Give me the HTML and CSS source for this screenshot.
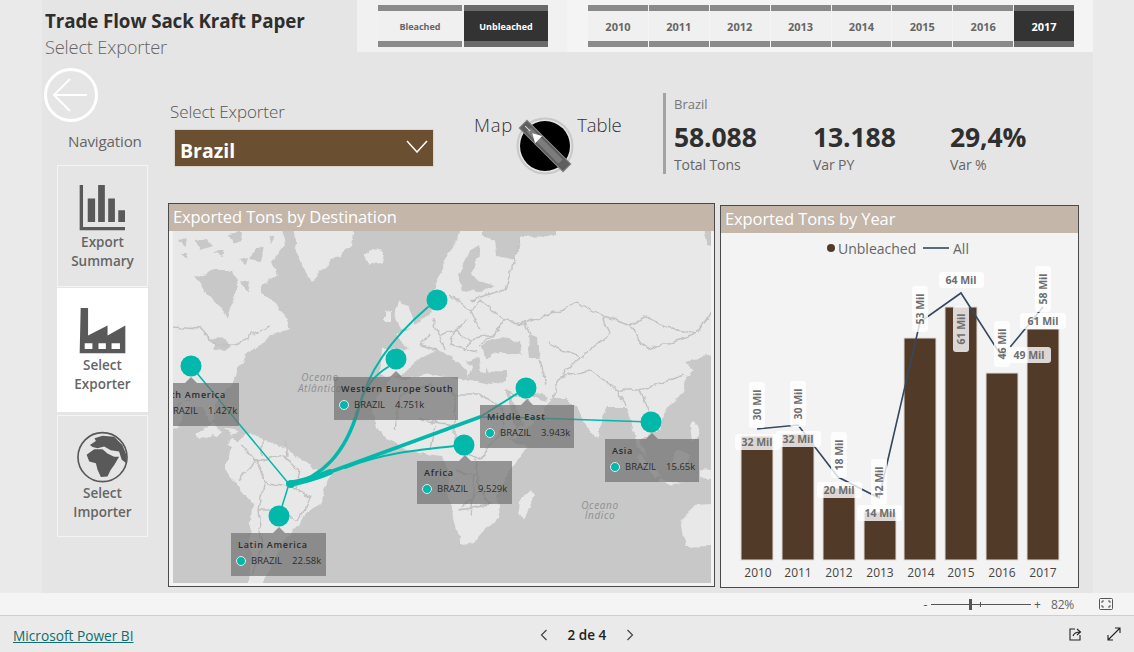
FILE: index.html
```html
<!DOCTYPE html>
<html lang="pt">
<head>
<meta charset="utf-8">
<title>Trade Flow Sack Kraft Paper</title>
<link rel="stylesheet" href="styles.css">
</head>
<body>
<div class="report">
  <div class="canvas">
    <header class="top">
      <div class="titles">
        <div class="title">Trade Flow Sack Kraft Paper</div>
        <div class="subtitle">Select Exporter</div>
      </div>
      <div class="slicers">
        <div class="slicer slicer-type">
          <div class="chip chip-small">Bleached</div>
          <div class="chip chip-small on">Unbleached</div>
        </div>
        <div class="slicer slicer-year">
          <div class="chip">2010</div><div class="chip">2011</div><div class="chip">2012</div><div class="chip">2013</div>
          <div class="chip">2014</div><div class="chip">2015</div><div class="chip">2016</div><div class="chip on">2017</div>
        </div>
      </div>
    </header>
    <div class="body">
      <nav class="side">
        <svg class="back" viewBox="0 0 56 56"><circle cx="28" cy="28" r="25.500" class="back-ring"/><path d="M44 28H11M27 12 11 28 27 44" class="back-arrow"/></svg>
        <div class="nav-label">Navigation</div>
        <div class="nav-btn">
          <svg class="ico ico-chart" viewBox="120 75 140 137"><path d="M122 75h10v125h125v10H122zM146 115h22v70h-22zM177 75h20v110h-20zM207 115h20v70h-20zM237 150h20v35h-20z"/></svg>
          <div>Export<br>Summary</div>
        </div>
        <div class="nav-btn active">
          <svg class="ico ico-factory" viewBox="120 445 140 137"><path fill-rule="evenodd" d="M125 445h22v82l58-30v30l53-30v83H122zM137 550v17h23v-17zM178 550v17h22v-17zM217 550v17h25v-17z"/></svg>
          <div>Select<br>Exporter</div>
        </div>
        <div class="nav-btn">
          <svg class="ico ico-globe" viewBox="110 808 160 160">
            <circle cx="190" cy="887" r="74" class="globe-ring"/>
            <path d="M152 850 170 838 166 830 190 822 225 825 250 850 262 880 262 905 248 895 240 870 215 866 195 855 175 860 160 856zM142 880 165 863 190 863 205 876 225 886 240 886 226 910 215 925 205 945 185 947 175 925 170 905 150 900z"/>
          </svg>
          <div>Select<br>Importer</div>
        </div>
      </nav>
      <main class="content">
        <section class="controls">
          <div class="filter">
            <div class="filter-label">Select Exporter</div>
            <div class="dropdown"><span class="drop-text">Brazil</span>
              <svg class="chev" viewBox="0 0 22 13"><path d="M1 1 11 12 21 1"/></svg>
            </div>
          </div>
          <div class="toggle">
            <span class="toggle-map">Map</span>
            <svg class="dial" viewBox="0 0 60 60">
              <circle cx="30" cy="30" r="27.500" class="dial-ring"/>
              <circle cx="30" cy="30" r="25"/>
              <g transform="rotate(-45 30 30)">
                <rect x="24.500" y="-1" width="11" height="62" class="dial-bar"/>
                <rect x="27" y="7" width="6" height="45" class="dial-in"/>
                <path d="M30 12 35 21H25z" class="dial-tip"/>
                <path d="M30 2V9" class="dial-dash"/>
              </g>
            </svg>
            <span class="toggle-table">Table</span>
          </div>
          <div class="kpis">
            <div class="kpi-name">Brazil</div>
            <div class="kpi-row">
              <div class="kpi kpi-a"><div class="kpi-val">58.088</div><div class="kpi-cap">Total Tons</div></div>
              <div class="kpi kpi-b"><div class="kpi-val">13.188</div><div class="kpi-cap">Var PY</div></div>
              <div class="kpi"><div class="kpi-val">29,4%</div><div class="kpi-cap">Var %</div></div>
            </div>
          </div>
        </section>
        <section class="panels">
          <article class="panel panel-map">
            <h2 class="band">Exported Tons by Destination</h2>
            <div class="map">
              <svg class="world" viewBox="173 231 538 352">
                <defs>
                  <filter id="rough" filterUnits="userSpaceOnUse" x="150" y="205" width="590" height="400">
                    <feTurbulence type="fractalNoise" baseFrequency=".09" numOctaves="3" seed="4"/>
                    <feDisplacementMap in="SourceGraphic" scale="7" xChannelSelector="R" yChannelSelector="G"/>
                  </filter>
                </defs>
                <rect x="173" y="231" width="538" height="352" class="sea"/>
                <g filter="url(#rough)">
                  <g class="land">
                    <path d="M155 215H277L285 245 272 262 278 275 262 285 262 295 272 300 285 315 290 328 270 335 262 345 245 355 238 368 232 385 222 397 213 403 217 420 211 423 205 408 190 408 182 415 178 428 155 432Z"/>
                    <path d="M292 215H357L352 245 335 258 322 270 312 281 303 268 296 250Z"/>
                    <path d="M363 255 372 250 383 252 381 261 370 266Z"/>
                    <path d="M205 427 212 424 222 432 218 436 212 434 200 440 195 434ZM222 428 238 431 232 434ZM232 436 240 446 236 450 228 443Z"/>
                    <path d="M227 460 233 445 248 433 268 440 293 453 312 467 332 473 324 490 322 503 305 513 298 527 285 540 275 558 265 575 262 600H246L250 560 250 537 252 503 232 480 227 470Z"/>
                    <path d="M392 378 378 395 371 412 377 425 385 437 400 447 418 453 442 456 448 470 449 490 452 517 462 545 475 543 490 525 500 515 497 495 510 470 527 447 510 440 515 438 530 425 543 413 550 400 553 398 565 398 577 407 587 427 597 440 603 417 607 407 627 407 632 425 636 445 648 458 640 440 650 433 660 430 663 413 683 393 687 377 693 370 685 362 693 358 730 353V215H465L458 240 448 253 438 280 432 297 440 302 432 310 420 322 395 335 408 348 382 350 380 373Z"/>
                    <path d="M398 300 408 305 415 325 400 330 395 318ZM385 312 392 310 392 322 385 322ZM530 490 533 497 525 520 518 515 520 500ZM730 503 695 505 680 520 685 547 730 545ZM640 455 660 475 655 478 635 458ZM675 450 690 455 685 470 672 465ZM660 480 685 485 660 484ZM700 470 730 472V480L700 478ZM695 420 700 435 692 440 690 425Z"/>
                  </g>
                  <g class="sea">
                    <path d="M195 277 215 270 232 270 238 285 228 317 220 307 205 290ZM196 240 208 238 212 246 200 250ZM228 234 240 232 243 240 232 243ZM255 250 264 247 260 260 250 258ZM180 255 187 253 186 260ZM210 338 225 340 232 348 215 350ZM215 252 224 250 222 256ZM240 260 248 258 246 266ZM268 235 276 236 272 244ZM240 283 250 281 248 291ZM178 240 186 238 185 245Z"/>
                    <path d="M393 379 410 368 425 355 437 350 450 355 470 362 480 355 490 373 505 372 505 382 490 385 470 380 450 378 430 374 410 378Z"/>
                    <path d="M482 345 495 338 520 342 522 355 500 352 485 358ZM528 335 538 338 540 358 530 358ZM505 390 510 392 524 426 516 428ZM528 392 535 390 548 398 545 402ZM478 245 470 250 458 275 462 290 480 292 495 285 478 280 470 275 480 255ZM483 215H557V236L520 237 515 260 496 256 494 240 483 236ZM703 215H730V250L706 245Z"/>
                  </g>
                  <g class="land">
                    <path d="M450 350 458 352 472 368 468 378 465 370 452 358ZM478 352 487 360 487 372 480 368Z"/>
                  </g>
                  <g class="borders">
                    <path d="M155 325 200 328 215 345 235 345 255 333 270 325M173 410 190 400M240 445 255 462 238 480M255 462 285 456 300 470 296 488 265 482 255 462M262 438 262 455M285 440 288 456M265 482 258 510 262 545 252 575M296 488 310 498 298 520 280 510 258 510"/>
                    <path d="M525 323 560 310 577 303 603 317 630 325 647 317 667 327 697 333 710 313 730 310M525 323 530 335M547 343 580 357 610 333 603 317M630 325 647 350 697 333M580 357 560 377 590 370 617 390 640 390 655 385 685 375M540 360 547 385M560 377 553 398M617 390 625 405M640 390 650 415 660 430"/>
                    <path d="M432 318 440 335 455 330 470 340 495 335 505 320 525 323M450 295 470 310 480 330M430 335 420 345 437 350M455 330 450 345 478 352M495 335 480 345M470 300 505 290 520 240M505 320 480 300 470 310M440 335 445 350M470 340 465 352M455 330 468 318"/>
                    <path d="M400 395 430 385 455 395 455 450M455 395 480 395 500 405 505 425 480 460 455 450M400 395 395 430M420 420 455 425M430 450 435 425M475 460 480 490 460 510 490 505 480 490M455 470 475 475 470 515M510 440 520 420M505 390 530 400"/>
                  </g>
                </g>
                <g class="flows">
                  <path class="f2" d="M358 410C368 370 395 335 428 307"/>
                  <path class="f2" d="M358 410C365 385 375 375 388 367"/>
                  <path class="f3" d="M291 484C320 478 345 455 358 410"/>
                  <path class="f4" d="M289 484C305 481 318 477 330 472"/>
                  <path class="f3" d="M330 472 480 417"/>
                  <path class="f2" d="M480 417 526 388"/>
                  <path class="f2" d="M345 468C385 452 425 449 464 445"/>
                  <path class="f1" d="M480 417 533 418 651 422"/>
                  <path class="f1" d="M289 484 191 366"/>
                  <path class="f1" d="M289 484 279 516"/>
                  <circle cx="291" cy="484" r="4"/>
                </g>
                <g class="nodes">
                  <circle cx="191" cy="366" r="10.500"/>
                  <circle cx="437" cy="300" r="10.500"/>
                  <circle cx="396" cy="359" r="10.500"/>
                  <circle cx="526" cy="388" r="10.500"/>
                  <circle cx="464" cy="445" r="10.500"/>
                  <circle cx="651" cy="422" r="10.500"/>
                  <circle cx="279" cy="516" r="10.500"/>
                </g>
                <text class="ocean" text-anchor="middle"><tspan x="320" y="381">Oceano</tspan><tspan x="320" y="392">Atlântico</tspan></text>
                <text class="ocean" text-anchor="middle"><tspan x="600" y="509">Oceano</tspan><tspan x="600" y="519">Índico</tspan></text>
              </svg>
              <div class="tip tip-na"><div class="tip-h">th America</div><div class="tip-r tip-cut"><span>RAZIL</span><b>1.427k</b></div></div>
              <div class="tip tip-we"><div class="tip-h">Western Europe South</div><div class="tip-r"><i></i><span>BRAZIL</span><b>4.751k</b></div></div>
              <div class="tip tip-me"><div class="tip-h">Middle East</div><div class="tip-r"><i></i><span>BRAZIL</span><b>3.943k</b></div></div>
              <div class="tip tip-af"><div class="tip-h">Africa</div><div class="tip-r"><i></i><span>BRAZIL</span><b>9.529k</b></div></div>
              <div class="tip tip-as"><div class="tip-h">Asia</div><div class="tip-r"><i></i><span>BRAZIL</span><b>15.65k</b></div></div>
              <div class="tip tip-la"><div class="tip-h">Latin America</div><div class="tip-r"><i></i><span>BRAZIL</span><b>22.58k</b></div></div>
            </div>
          </article>
          <article class="panel panel-chart">
            <h2 class="band">Exported Tons by Year</h2>
            <svg class="chart" viewBox="721 233 357 354">
              <circle cx="831" cy="248" r="4" class="bar"/>
              <text class="legend" x="838" y="254">Unbleached</text>
              <path class="line" d="M923 248H949"/>
              <text class="legend" x="953" y="254">All</text>
              <g class="bars">
                <rect class="bar" x="741" y="436" width="32" height="124"/>
                <rect class="bar" x="782" y="434" width="32" height="126"/>
                <rect class="bar" x="823" y="488" width="32" height="72"/>
                <rect class="bar" x="864" y="512" width="32" height="48"/>
                <rect class="bar" x="904" y="338" width="32" height="222"/>
                <rect class="bar" x="945" y="307" width="32" height="253"/>
                <rect class="bar" x="986" y="373" width="32" height="187"/>
                <rect class="bar" x="1027" y="329" width="32" height="231"/>
              </g>
              <path class="line" d="M757 429 798 425 838 477 879 498 920 322 961 293 1002 357 1043 307"/>
              <g class="lab">
                <g><rect x="735" y="434" width="45" height="16" rx="3"/><text x="757" y="446">32 Mil</text></g>
                <g><rect x="776" y="431" width="45" height="16" rx="3"/><text x="798" y="443">32 Mil</text></g>
                <g><rect x="817" y="482" width="45" height="16" rx="3"/><text x="839" y="494">20 Mil</text></g>
                <g><rect x="857" y="505" width="45" height="16" rx="3"/><text x="880" y="517">14 Mil</text></g>
                <g><rect x="939" y="272" width="45" height="16" rx="3"/><text x="961" y="284">64 Mil</text></g>
                <g><rect x="1020" y="313" width="46" height="16" rx="3"/><text x="1043" y="325">61 Mil</text></g>
                <g transform="rotate(-90 757 405)"><rect x="734" y="397" width="46" height="16" rx="3"/><text x="757" y="409">30 Mil</text></g>
                <g transform="rotate(-90 798 404)"><rect x="775" y="396" width="46" height="16" rx="3"/><text x="798" y="408">30 Mil</text></g>
                <g transform="rotate(-90 839 455)"><rect x="816" y="447" width="46" height="16" rx="3"/><text x="839" y="459">18 Mil</text></g>
                <g transform="rotate(-90 879 482)"><rect x="856" y="474" width="46" height="16" rx="3"/><text x="879" y="486">12 Mil</text></g>
                <g transform="rotate(-90 920 309)"><rect x="897" y="301" width="46" height="16" rx="3"/><text x="920" y="313">53 Mil</text></g>
                <g transform="rotate(-90 961 329)"><rect x="938" y="321" width="46" height="16" rx="3"/><text x="961" y="333">61 Mil</text></g>
                <g transform="rotate(-90 1002 344)"><rect x="979" y="336" width="46" height="16" rx="3"/><text x="1002" y="348">46 Mil</text></g>
                <g><rect x="1006" y="347" width="45" height="16" rx="3"/><text x="1029" y="359">49 Mil</text></g>
                <g transform="rotate(-90 1043 289)"><rect x="1020" y="281" width="46" height="16" rx="3"/><text x="1043" y="293">58 Mil</text></g>
              </g>
              <g class="years">
                <text x="758" y="577">2010</text><text x="798" y="577">2011</text><text x="839" y="577">2012</text><text x="880" y="577">2013</text>
                <text x="921" y="577">2014</text><text x="961" y="577">2015</text><text x="1002" y="577">2016</text><text x="1043" y="577">2017</text>
              </g>
            </svg>
          </article>
        </section>
      </main>
    </div>
  </div>
</div>
<div class="zoombar">
  <span class="zm">-</span>
  <div class="slider"><i class="thumb"></i><i class="tick"></i></div>
  <span class="zm">+</span>
  <span class="pct">82%</span>
  <svg class="fit" viewBox="0 0 14 12"><rect x=".5" y=".5" width="13" height="11" rx="1"/><path d="M3 5V3H5M9 3H11V5M11 7V9H9M5 9H3V7"/></svg>
</div>
<footer class="foot">
  <a class="pbi" href="#">Microsoft Power BI</a>
  <div class="pager">
    <svg class="pg" viewBox="0 0 8 12"><path d="M6.500 1 1.500 6 6.500 11"/></svg>
    <span>2 de 4</span>
    <svg class="pg" viewBox="0 0 8 12"><path d="M1.500 1 6.500 6 1.500 11"/></svg>
  </div>
  <div class="foot-icons">
    <svg class="fi" viewBox="0 0 14 14"><path d="M7 2H2V13H12V8M5 9C6 6 8 5 12 5M9 2 12.500 5 9 8"/></svg>
    <svg class="fi" viewBox="0 0 14 14"><path d="M8 1H13V6M13 1 1 13M1 8V13H6"/></svg>
  </div>
</footer>
</body>
</html>
```
FILE: styles.css
```css
* { box-sizing: border-box; }
html, body { margin: 0; padding: 0; }
body {
  width: 1134px; height: 652px; overflow: hidden;
  font-family: "Open Sans", "Noto Sans", sans-serif;
  background: #eaeaea; color: #333;
}
.report { height: 593px; padding: 0 41px 0 42px; }
.canvas { height: 593px; background: #e5e5e5; display: flex; flex-direction: column; }

.top { height: 52px; display: flex; justify-content: space-between; }
.titles { padding: 8px 0 0 3px; }
.title { font-size: 18.800px; font-weight: 700; line-height: 26px; color: #2e2e2e; letter-spacing: -.1px; }
.subtitle { font-size: 18.300px; font-weight: 300; line-height: 26px; color: #666; letter-spacing: -.2px; }
.slicers { width: 736px; display: flex; padding-top: 5px; background: linear-gradient(90deg, #f1f1f1 210px, #f4f4f4 210px); }
.slicer { display: flex; gap: 2px; height: 42px; }
.slicer-type { margin-left: 21px; width: 170px; }
.slicer-year { margin-left: 40px; gap: 1px; width: 486px; }
.chip {
  flex: 1; display: flex; align-items: center; justify-content: center;
  background: #f0f0f0; border-top: 6px solid #8a8a8a; border-bottom: 6px solid #8a8a8a;
  font-size: 11px; font-weight: 700; color: #666;
}
.chip-small { font-size: 9px; }
.chip.on { background: #333; color: #fff; border-color: #6a6a6a; }

.body { display: flex; flex: 1; min-height: 0; }
.side { width: 126px; padding: 15px 0 0 1px; display: flex; flex-direction: column; }
.back { width: 56px; height: 56px; }
.back-ring { fill: none; stroke: #fff; stroke-width: 3; }
.back-arrow { fill: none; stroke: #fff; stroke-width: 2; }
.nav-label { margin: 6px 0 12px 25px; height: 24px; line-height: 24px; font-size: 15.200px; color: #666; white-space: nowrap; letter-spacing: -.2px; }
.nav-btn {
  flex: none; width: 91px; height: 122px; margin: 0 0 1px 14px; padding-top: 19px;
  border: 1px solid #f4f4f4; text-align: center;
  font-size: 13.500px; font-weight: 600; line-height: 19px; color: #666;
  display: flex; flex-direction: column; align-items: center;
}
.nav-btn.active { background: #fff; border-color: #fff; height: 124px; margin-bottom: 3px; }
.ico { display: block; fill: #595959; margin-bottom: 2px; width: 47px; height: 46px; flex: none; }
.ico-globe { width: 53px; height: 53px; margin: -4px 0 0; }
.globe-ring { fill: none; stroke: #595959; stroke-width: 5; }

.content { flex: 1; display: flex; flex-direction: column; }
.controls { height: 151px; display: flex; }
.filter { width: 304px; padding: 48px 0 0 2px; }
.filter-label { font-size: 17px; font-weight: 300; line-height: 24px; color: #555; letter-spacing: -.1px; }
.dropdown {
  width: 260px; height: 38px; margin: 5px 0 0 4px; padding: 0 5px; background: #6b4f31; border: 1.500px solid #d8d3cb;
  display: flex; align-items: center; justify-content: space-between;
  font-size: 19.500px; font-weight: 700; color: #fff;
}
.drop-text { padding-top: 5px; }
.chev { width: 22px; height: 13px; fill: none; stroke: #fff; stroke-width: 1.500; margin-top: -3px; }
.toggle { width: 191px; display: flex; align-items: flex-start; padding-top: 61px; font-size: 18.500px; font-weight: 300; color: #333; }
.toggle-map { margin-left: 2px; line-height: 24px; letter-spacing: .8px; }
.dial { width: 60px; height: 60px; margin: 3px 2px 0 2px; flex: none; }
.dial-ring { fill: #e5e5e5; stroke: #c9c9c9; stroke-width: 2; }
.dial-bar { fill: #5e5e5e; stroke: #8a8a8a; stroke-width: 1; }
.dial-in { fill: #7c7c7c; }
.dial-tip { fill: #fff; }
.dial-dash { stroke: #ddd; stroke-width: 1; }
.toggle-table { line-height: 24px; letter-spacing: -.1px; }
.kpis { border-left: 3px solid #a3a3a3; height: 81px; margin-top: 41px; padding-left: 8px; flex: 1; }
.kpi-name { font-size: 13px; line-height: 22px; color: #777; }
.kpi-row { display: flex; margin-top: 6px; }
.kpi-a { width: 139px; }
.kpi-b { width: 137px; }
.kpi-val { font-size: 26.500px; font-weight: 700; line-height: 33px; color: #2f2f2f; letter-spacing: -.1px; }
.kpi-cap { font-size: 14px; line-height: 22px; color: #666; letter-spacing: -.1px; }

.panels { display: flex; align-items: flex-start; gap: 5px; }
.panel { background: #f3f3f3; border: 1px solid #4a4a4a; display: flex; flex-direction: column; }
.panel-map { width: 547px; height: 384px; }
.panel-chart { width: 359px; height: 383px; margin-top: 2px; }
.band {
  margin: 0; height: 27px; padding-left: 4px; background: #c4b6a9; color: #fff;
  font-size: 16.500px; font-weight: 400; line-height: 26px; letter-spacing: -.1px;
}
.map { position: relative; margin: 0 3px 0 4px; width: 538px; height: 352px; overflow: hidden; }
.world { display: block; width: 538px; height: 352px; }
.sea { fill: #c8c8c8; }
.land { fill: #e8e8e8; }
.borders { fill: none; stroke: #c2c2c2; stroke-width: 1.400; stroke-linejoin: round; }
.flows { fill: #01b8aa; }
.flows path { fill: none; stroke: #01b8aa; stroke-linecap: round; }
.f1 { stroke-width: 1.500; }
.f2 { stroke-width: 2; }
.f3 { stroke-width: 3.500; }
.f4 { stroke-width: 6; }
.nodes { fill: #01b8aa; }
.ocean { font: italic 10px "Open Sans", sans-serif; fill: #8f8f8f; letter-spacing: .6px; }

.tip { position: absolute; height: 43px; background: rgba(112, 112, 112, .7); padding: 5px 0 0 7px; color: #2c2c2c; }
.tip::before { content: ""; position: absolute; top: -6px; border: 6px solid transparent; border-top: 0; border-bottom-color: rgba(112, 112, 112, .7); left: calc(50% - 6px); }
.tip-h { font-size: 9px; font-weight: 600; line-height: 14px; letter-spacing: .75px; white-space: nowrap; }
.tip-r { display: flex; align-items: center; font-size: 9.500px; line-height: 16px; white-space: nowrap; margin-top: 1px; }
.tip-r i { width: 10px; height: 10px; border-radius: 50%; background: #01b8aa; border: 1px solid #e8e8e8; margin: 0 5px 0 -2px; flex: none; }
.tip-r span { margin-right: 10px; }
.tip-r b { font-weight: 400; }
.tip-na { left: 0; top: 152px; width: 66px; }
.tip-na::before { left: 12px; }
.tip-na .tip-h { margin-left: -9px; }
.tip-cut { margin-left: -7px; }
.tip-we { left: 161px; top: 146px; width: 124px; }
.tip-me { left: 307px; top: 174px; width: 94px; }
.tip-af { left: 244px; top: 230px; width: 95px; }
.tip-as { left: 432px; top: 208px; width: 94px; }
.tip-la { left: 58px; top: 302px; width: 95px; }

.chart { display: block; width: 357px; height: 354px; }
.bar { fill: #523a28; }
.bars .bar { stroke: #e0dcd7; stroke-width: 1; }
.line { fill: none; stroke: #34495e; stroke-width: 1.600; }
.legend { font-size: 14px; fill: #666; }
.lab rect { fill: #fff; fill-opacity: .8; }
.lab text { font-size: 10.500px; font-weight: 700; fill: #6e6e6e; text-anchor: middle; }
.years text { font-size: 12px; fill: #444; text-anchor: middle; }

.zoombar { height: 23px; background: #f4f4f4; border-bottom: 1px solid #cfcfcf; display: flex; align-items: center; padding-left: 922px; font-size: 11px; color: #555; }
.zm { width: 7px; font-size: 12px; text-align: center; }
.slider { position: relative; width: 100px; height: 1px; background: #555; margin: 0 3px 0 2px; }
.thumb { position: absolute; left: 38px; top: -5px; width: 3px; height: 11px; background: #555; }
.tick { position: absolute; left: 49px; top: -2px; width: 1px; height: 5px; background: #555; }
.pct { margin-left: 10px; color: #666; font-size: 12px; letter-spacing: -.2px; }
.fit { width: 14px; height: 12px; margin-left: 25px; fill: none; stroke: #555; stroke-width: 1; }
.foot { height: 36px; display: flex; align-items: center; padding: 2px 13px 0; }
.pbi { color: #0f6e6e; font-size: 13.700px; width: 527px; }
.pager { display: flex; align-items: center; width: 529px; font-size: 13.500px; font-weight: 600; color: #222; }
.pager span { margin: 0 20px; }
.pg { width: 8px; height: 12px; fill: none; stroke: #444; stroke-width: 1.200; }
.foot-icons { display: flex; gap: 25px; margin-top: -2px; }
.fi { width: 14px; height: 14px; fill: none; stroke: #222; stroke-width: 1.100; }
```
